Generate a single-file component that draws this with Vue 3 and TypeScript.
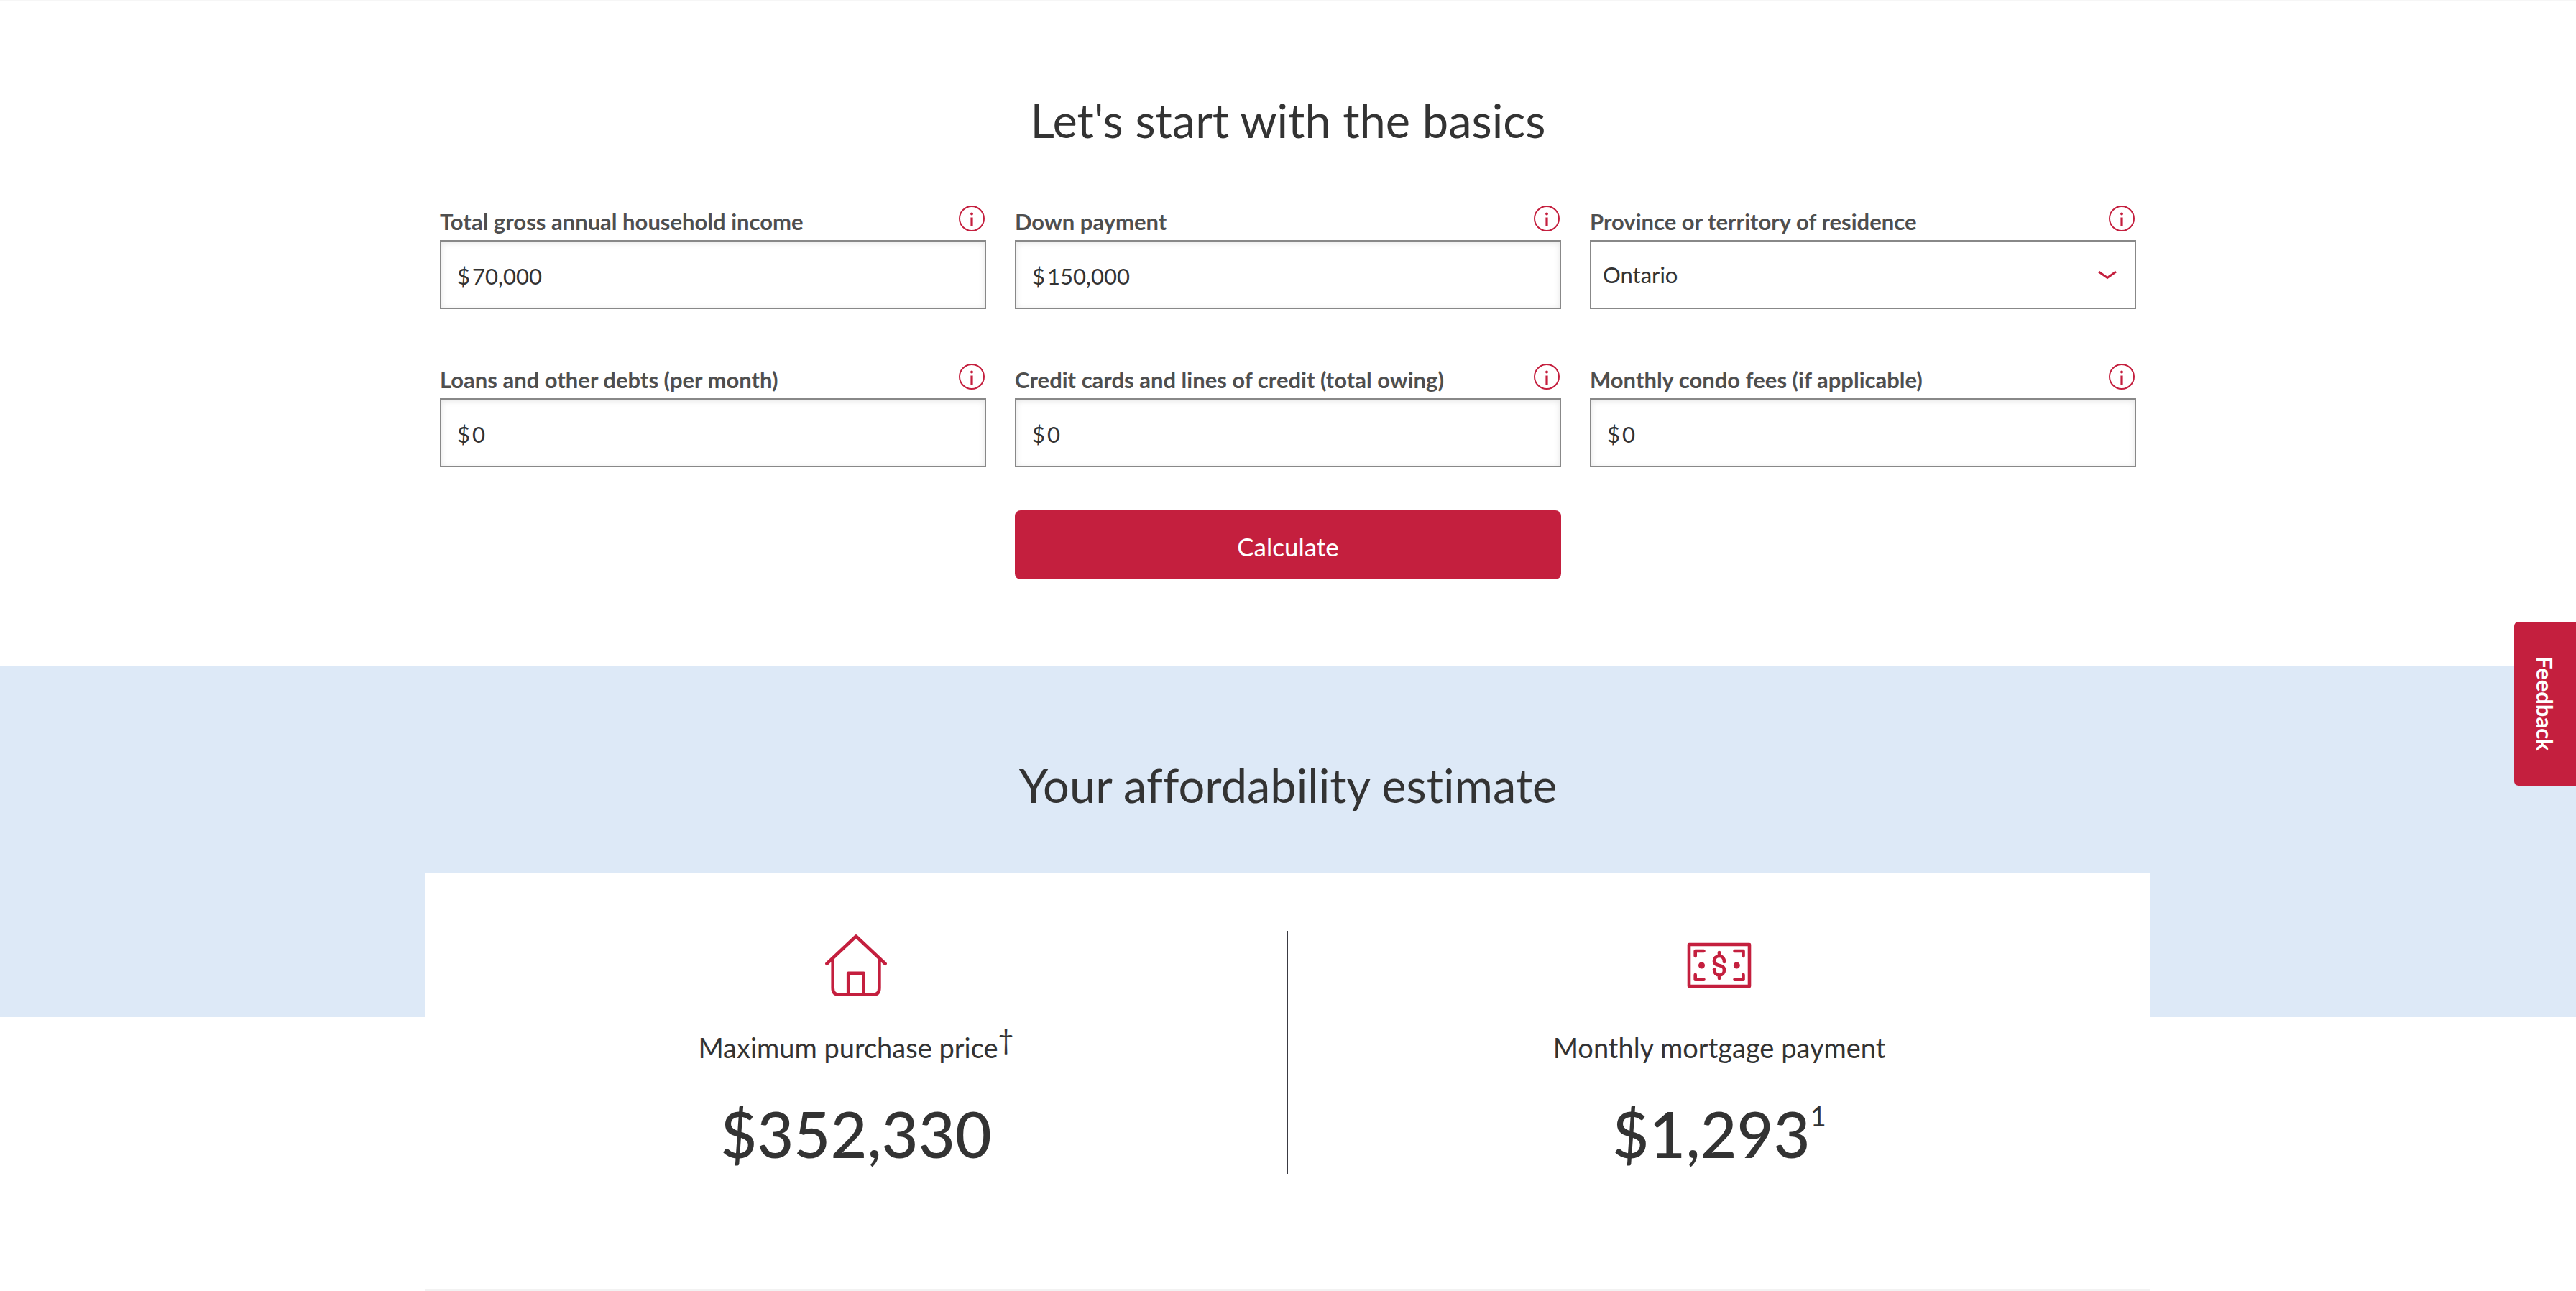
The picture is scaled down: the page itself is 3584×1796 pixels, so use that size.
<script setup lang="ts">
import { reactive } from 'vue'

interface Field {
  id: string
  label: string
  kind: 'money' | 'select'
}

const fields: Field[] = [
  { id: 'income', label: 'Total gross annual household income', kind: 'money' },
  { id: 'down', label: 'Down payment', kind: 'money' },
  { id: 'province', label: 'Province or territory of residence', kind: 'select' },
  { id: 'loans', label: 'Loans and other debts (per month)', kind: 'money' },
  { id: 'credit', label: 'Credit cards and lines of credit (total owing)', kind: 'money' },
  { id: 'condo', label: 'Monthly condo fees (if applicable)', kind: 'money' },
]

const provinces: string[] = ['Alberta', 'British Columbia', 'Manitoba', 'Ontario', 'Quebec']

const values = reactive<Record<string, string>>({
  income: '70,000',
  down: '150,000',
  province: 'Ontario',
  loans: '0',
  credit: '0',
  condo: '0',
})
</script>

<template>
  <main class="page">
    <section class="basics">
      <h2 class="heading">Let's start with the basics</h2>
      <form class="form" @submit.prevent>
        <div class="fields">
          <div v-for="field in fields" :key="field.id" class="field">
            <div class="field-head">
              <label :for="field.id">{{ field.label }}</label>
              <button type="button" class="info" :aria-label="'More about ' + field.label">
                <svg viewBox="0 0 36 36" width="36" height="36" aria-hidden="true">
                  <circle cx="18" cy="18" r="17" fill="none" stroke="#c41f3e" stroke-width="2" />
                  <circle cx="18" cy="11.500" r="1.900" fill="#c41f3e" />
                  <path d="M18 16.500V29" stroke="#c41f3e" stroke-width="3.200" />
                </svg>
              </button>
            </div>
            <div v-if="field.kind === 'money'" class="control money">
              <span class="prefix">$</span>
              <input :id="field.id" v-model="values[field.id]" type="text" inputmode="numeric" />
            </div>
            <div v-else class="control choice">
              <select :id="field.id" v-model="values[field.id]">
                <option v-for="p in provinces" :key="p">{{ p }}</option>
              </select>
              <svg class="chevron" viewBox="0 0 28 14" width="28" height="14" aria-hidden="true">
                <path d="M2 2L14 10.500L26 2" fill="none" stroke="#c41f3e" stroke-width="3" />
              </svg>
            </div>
          </div>
        </div>
        <button type="submit" class="calculate">Calculate</button>
      </form>
    </section>

    <section class="estimate">
      <div class="band">
        <h2 class="heading">Your affordability estimate</h2>
      </div>
      <div class="card">
        <div class="result">
          <svg viewBox="0 0 96 96" class="icon" aria-hidden="true">
            <path d="M7.300 45.700L48 7.500L88.700 45.700" />
            <path d="M15.700 38V79.500Q15.700 88.700 24.500 88.700H71.600Q80.400 88.700 80.400 79.500V38" />
            <path d="M37.200 88V58.700H58.700V88" />
          </svg>
          <p class="caption">Maximum purchase price<sup class="dagger">†</sup></p>
          <p class="amount">$352,330</p>
        </div>
        <div class="result">
          <svg viewBox="0 0 96 96" class="icon" aria-hidden="true">
            <rect x="6" y="19" width="84" height="58" />
            <path d="M26.500 28H14.700V35M69.500 28H81.500V35M26.500 67.700H14.700V61M69.500 67.700H81.500V61" />
            <path d="M48 30V34M48 62V66M55 43C55 38 52 35 48 35S41 38 41 42C41 50.500 55 45.500 55 54.500C55 58.500 52 61.500 48 61.500S41 58.500 41 53.500" />
            <circle class="dot" cx="23.500" cy="48" r="4.500" />
            <circle class="dot" cx="72.300" cy="48" r="4.500" />
          </svg>
          <p class="caption">Monthly mortgage payment</p>
          <p class="amount">$1,293<sup class="note">1</sup></p>
        </div>
      </div>
    </section>

    <button type="button" class="feedback">Feedback</button>
  </main>
</template>

<style>
body {
  margin: 0;
  background: #fff;
}
</style>

<style scoped>
.page {
  font-family: Lato, "Open Sans", sans-serif;
  font-variant-ligatures: none;
  color: #333;
  border-top: 2px solid #f6f6f6;
}

.basics {
  padding: 125px 20px 120px;
}

.heading {
  margin: 0;
  font-size: 65px;
  line-height: 80px;
  font-weight: 400;
  text-align: center;
}

.form {
  max-width: 2360px;
  margin: 79px auto 0;
}

.fields {
  display: grid;
  grid-template-columns: repeat(3, 1fr);
  gap: 76px 40px;
}

.field-head {
  display: flex;
  justify-content: space-between;
  align-items: flex-start;
  padding-right: 2px;
  margin-bottom: 4px;
}

.field-head label {
  font-size: 31px;
  line-height: 44px;
  font-weight: 700;
  color: #4f4f4f;
}

.info {
  display: block;
  padding: 0;
  border: 0;
  background: none;
  cursor: pointer;
}

.info svg {
  display: block;
}

.control {
  box-sizing: border-box;
  display: flex;
  height: 96px;
  border: 2px solid #888;
  background: #fff;
  font-size: 31px;
}

.money {
  align-items: center;
  gap: 3px;
  padding: 3px 22px 0;
  box-shadow: inset 0 2px 8px rgba(0, 0, 0, 0.1);
}

.money input,
.choice select {
  flex: 1;
  min-width: 0;
  margin: 0;
  border: 0;
  outline: 0;
  background: transparent;
  color: inherit;
  font: inherit;
}

.money input {
  padding: 0;
}

.choice {
  position: relative;
}

.choice select {
  padding: 0 60px 0 16px;
  appearance: none;
}

.chevron {
  position: absolute;
  right: 24px;
  top: 40px;
  pointer-events: none;
}

.calculate {
  display: block;
  width: calc((100% - 80px) / 3);
  height: 96px;
  margin: 60px auto 0;
  padding: 4px 0 0;
  border: 0;
  border-radius: 8px;
  background: #c41f3e;
  color: #fff;
  font: inherit;
  font-size: 35px;
}

.band {
  padding: 126px 20px 283px;
  background: #dde9f7;
}

.card {
  display: grid;
  grid-template-columns: 1fr 1fr;
  max-width: 2400px;
  margin: -200px auto 0;
  padding: 80px 0 160px;
  border-bottom: 3px solid #f2f2f2;
  background: #fff;
}

.result {
  display: flex;
  flex-direction: column;
  align-items: center;
  padding-bottom: 4px;
}

.result:first-child {
  border-right: 2px solid #3a3a42;
}

.icon {
  width: 96px;
  height: 96px;
  fill: none;
  stroke: #c41f3e;
  stroke-width: 4.600;
  stroke-linecap: round;
  stroke-linejoin: round;
}

.dot {
  fill: #c41f3e;
  stroke: none;
}

.caption {
  margin: 42px 0 44px;
  font-size: 38px;
  line-height: 48px;
}

.amount {
  margin: 0;
  font-size: 88px;
  line-height: 104px;
  font-weight: 500;
}

sup {
  font-size: 38px;
  line-height: 0;
  font-weight: 400;
}

.dagger {
  vertical-align: 12px;
}

.note {
  vertical-align: 44px;
}

.feedback {
  position: fixed;
  top: 865px;
  right: 0;
  width: 86px;
  height: 228px;
  padding: 0;
  border: 0;
  border-radius: 6px 0 0 6px;
  background: #c41f3e;
  color: #fff;
  font: inherit;
  font-size: 31px;
  font-weight: 700;
  writing-mode: vertical-rl;
}
</style>
